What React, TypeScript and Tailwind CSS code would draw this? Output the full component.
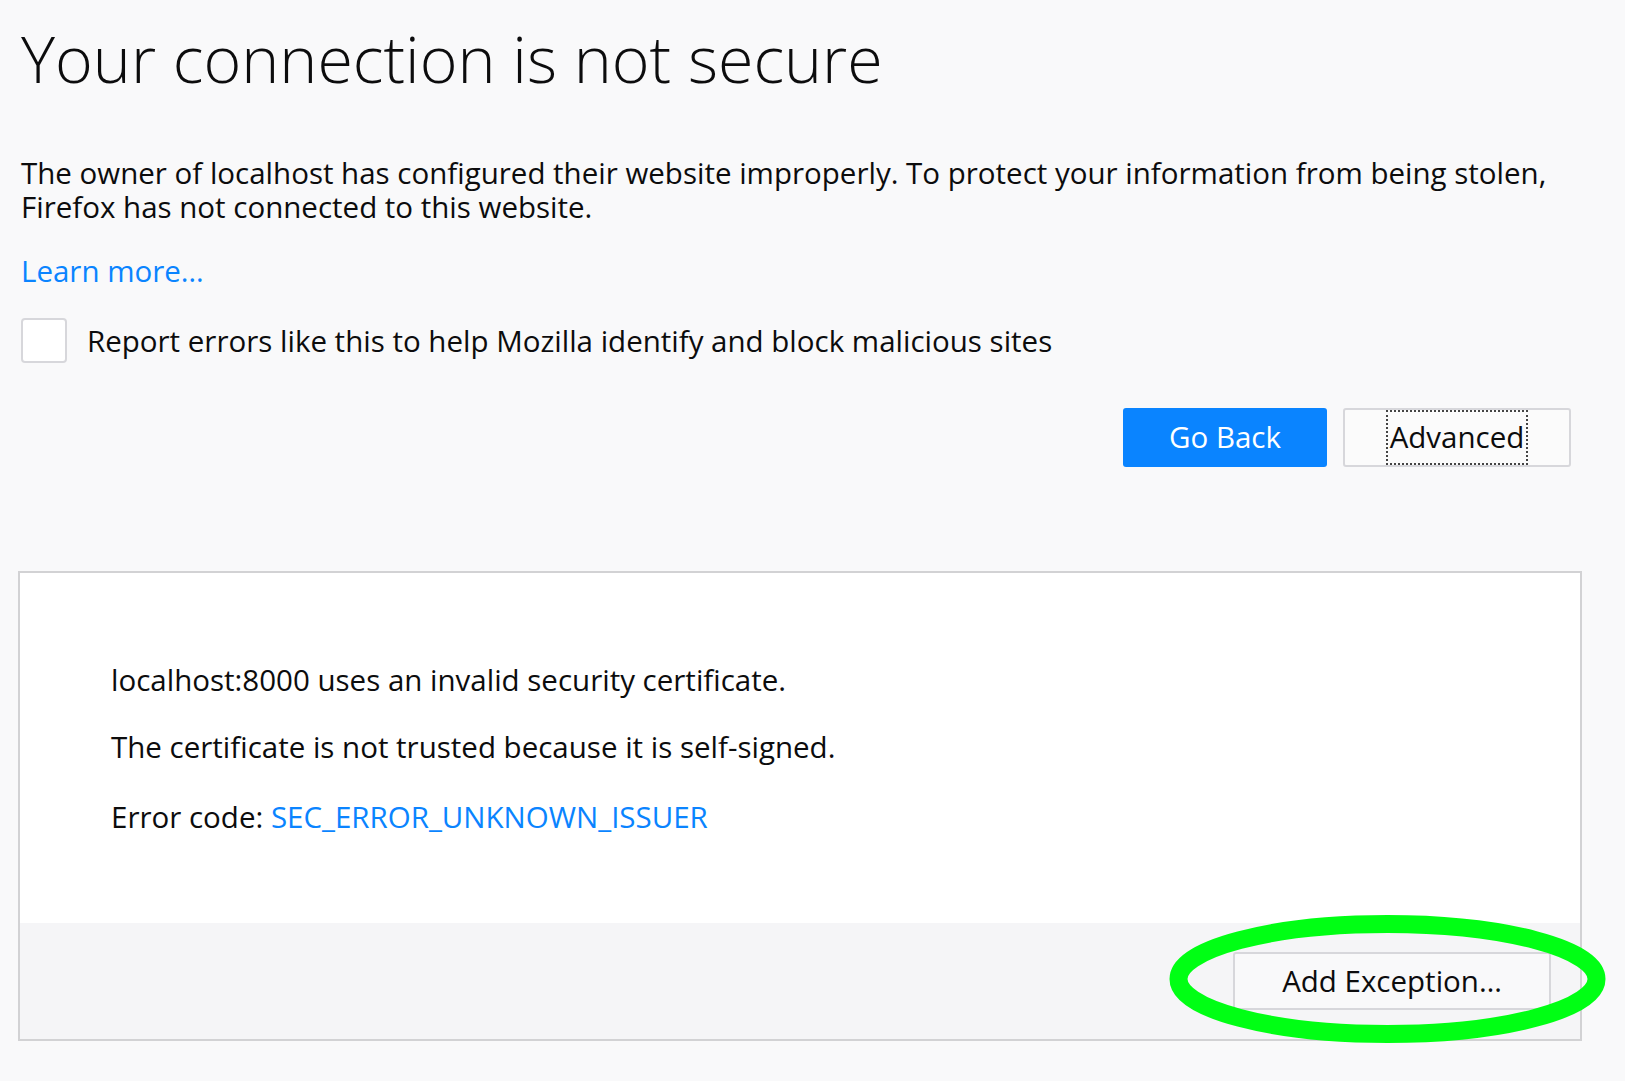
export default function App() {
  return (
    <div
      className="relative min-h-screen bg-[#f9f9fa] text-[#0c0c0d]"
      style={{ fontFamily: '"Open Sans", "Noto Sans", sans-serif' }}
    >
      <div className="w-[1583px] pl-[21px]">
        {/* titolo */}
        <h1 className="pt-[18px] text-[64.5px] font-light leading-[80px]">
          Your connection is not secure
        </h1>

        <p className="mt-[58px] text-[29.5px] leading-[34px]">
          The owner of localhost has configured their website improperly. To protect your information from being stolen,
          <br />
          Firefox has not connected to this website.
        </p>

        <a href="#" className="mt-[30px] block text-[29.5px] leading-[34px] text-[#0a84ff]">
          Learn more…
        </a>

        <label className="mt-[30px] flex items-center gap-[20px]">
          <span className="block h-[45px] w-[46px] rounded-[4px] border-2 border-[#d7d7db] bg-white" />
          <span className="text-[29.5px] leading-[34px]">
            Report errors like this to help Mozilla identify and block malicious sites
          </span>
        </label>

        <div className="mt-[45px] flex justify-end gap-[16px] pr-[12px]">
          <button className="h-[59px] w-[204px] rounded-[3px] bg-[#0a84ff] text-[29.5px] text-white">
            Go Back
          </button>
          <button className="flex h-[59px] w-[228px] items-center justify-center rounded-[3px] border-2 border-[#d7d7db] bg-[#fbfbfb] text-[29.5px]">
            <span className="flex h-[55px] items-center border-2 border-dotted border-[#444] px-[2px]">Advanced</span>
          </button>
        </div>
      </div>

      {/* pannello avanzato */}
      <div className="ml-[18px] mt-[104px] w-[1564px] border-2 border-[#d2d2d4] bg-white">
        <div className="pl-[91px] pt-[90px] pb-[89px] text-[29.5px] leading-[34px]">
          <p>localhost:8000 uses an invalid security certificate.</p>
          <p className="mt-[33px]">The certificate is not trusted because it is self-signed.</p>
          <p className="mt-[36px]">
            Error code: <a href="#" className="text-[#0a84ff]">SEC_ERROR_UNKNOWN_ISSUER</a>
          </p>
        </div>
        <div className="flex justify-end bg-[#f5f5f7] pb-[29px] pr-[29px] pt-[29px]">
          <button className="h-[58px] w-[318px] rounded-[3px] border-2 border-[#d7d7db] bg-[#f9f9fa] text-[29.5px]">
            Add Exception…
          </button>
        </div>
      </div>

      <svg className="absolute left-[1169px] top-[915px]" width="437" height="128" viewBox="0 0 437 128">
        <ellipse cx="218.5" cy="64" rx="209" ry="55" fill="none" stroke="#00ff14" strokeWidth="18" />
      </svg>
    </div>
  )
}
